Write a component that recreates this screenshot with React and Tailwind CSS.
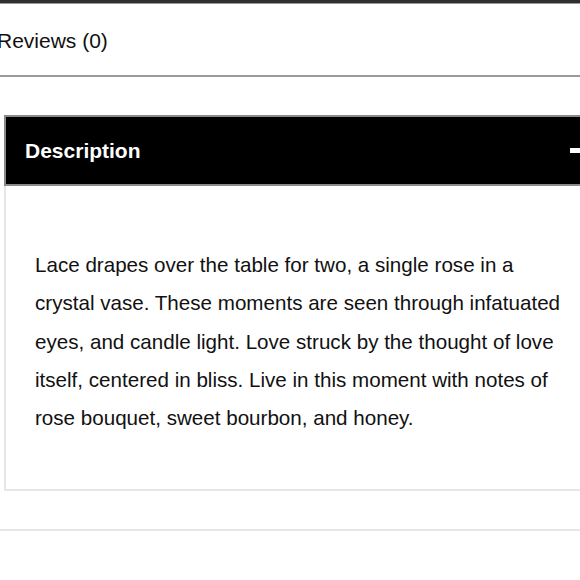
import React from "react";

const App = () => {
    return (
        <div className="w-[580px] h-[580px] overflow-hidden bg-white" style={{ fontFamily: '"Liberation Sans", Arial, sans-serif' }}>
            {/* Top edge */}
            <div className="h-[3px] bg-[#2f2f2f]"></div>
            <div className="h-px bg-[#9a9a9a]"></div>

            {/* Reviews tab */}
            <div className="h-[73px] border-b-2 border-[#9a9a9a] flex items-center -ml-[3px]">
                <span className="text-[21px] text-[#111] leading-none pt-[2px]">Reviews (0)</span>
            </div>

            {/* Accordion */}
            <div className="mt-[38px] ml-[4px] w-[600px]">
                <div className="h-[71px] bg-black border-2 border-[#8a8a8a] flex items-center justify-between pl-[19px]">
                    <h3 className="text-[21px] font-bold text-white">Description</h3>
                    <div className="w-[30px] h-[5px] bg-white mr-[2px]"></div>
                </div>
                <div className="border-l-2 border-b-2 border-[#e6e6e6] pl-[29px] pr-[20px] pt-[60px] pb-[52px]">
                    <p className="text-[20.6px] leading-[38.3px] text-[#111] w-[532px]">
                        Lace drapes over the table for two, a single rose in a crystal vase. These moments are seen through infatuated eyes, and candle light. Love struck by the thought of love itself, centered in bliss. Live in this moment with notes of rose bouquet, sweet bourbon, and honey.
                    </p>
                </div>
            </div>

            <div className="mt-[38px] h-[2px] bg-[#e6e6e6]"></div>
        </div>
    );
};

export default App;
